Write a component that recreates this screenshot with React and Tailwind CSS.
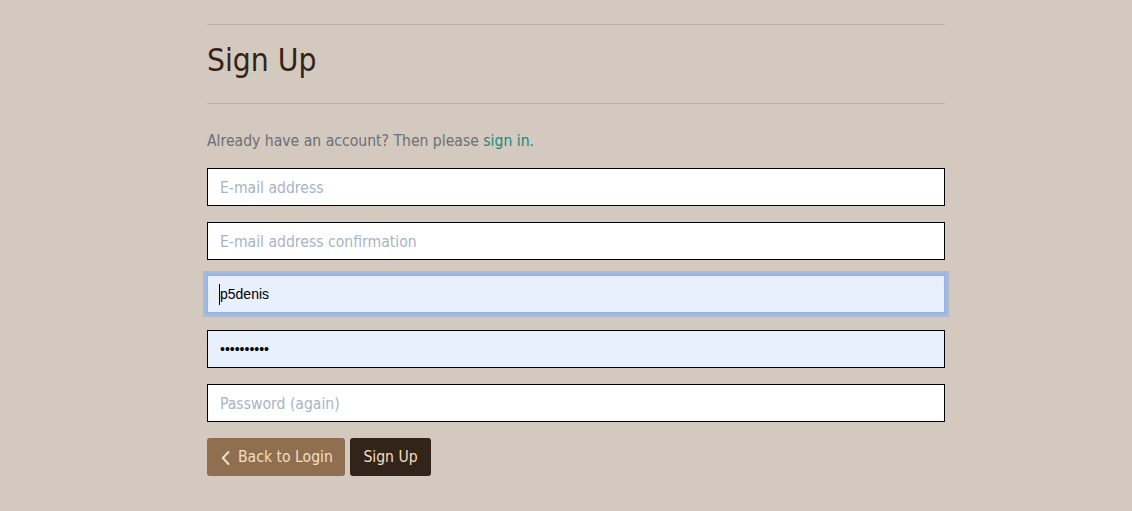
const font = { fontFamily: '"DejaVu Sans Condensed", "DejaVu Sans", sans-serif' };

function Field({ placeholder, value, type = 'text', autofill, focused }) {
    return (
        <div
            className={
                focused
                    ? 'h-[40px] -mx-[1px] -mt-[2px] border-2 border-[#93b4ee] shadow-[0_0_0_3px_#acb9d4] bg-[#e8f0fe] flex items-center px-[12px]'
                    : `h-[38px] border border-black flex items-center px-[12px] ${autofill ? 'bg-[#e8f0fe]' : 'bg-white'}`
            }
        >
            {value ? (
                <span
                    className={`translate-y-[1px] text-[14px] text-black ${focused ? 'border-l border-black -ml-px' : ''}`}
                    style={{ fontFamily: '"Liberation Sans", Arial, sans-serif' }}
                >
                    {type === 'password' ? '••••••••••' : value}
                </span>
            ) : (
                <span className="translate-y-[2px] text-[15.6px] text-[#a9b3c1]">{placeholder}</span>
            )}
        </div>
    );
}

export default function App() {
    return (
        <div className="min-h-[511px] bg-[#d3c9bf] pt-[24px]" style={font}>
            <div className="w-[738px] ml-[207px]">
                <div className="border-t border-[#b9b0a6]" />
                <h1 className="text-[31.5px] leading-none text-[#33241a] pt-[20px] pb-[26px]">Sign Up</h1>
                <div className="border-t border-[#b9b0a6]" />
                <p className="text-[15.6px] text-[#6b6f76] mt-[26px] mb-[16px] leading-[22px]">
                    Already have an account? Then please <span className="text-[#178b7c]">sign in</span>.
                </p>
                <div className="flex flex-col gap-[16px]">
                    <Field placeholder="E-mail address" />
                    <Field placeholder="E-mail address confirmation" />
                    <Field value="p5denis" focused />
                    <Field value="password12" type="password" autofill />
                    <Field placeholder="Password (again)" />
                </div>
                <div className="flex gap-[5px] mt-[16px]">
                    <button className="h-[38px] w-[138px] rounded-[3px] bg-[#8f6f50] text-[#f2dfc4] text-[15.6px] flex items-center pl-[14px] pt-[3px] gap-[8px]">
                        <svg width="9" height="16" viewBox="0 0 9 16" fill="none" stroke="currentColor" strokeWidth="2" strokeLinecap="round" strokeLinejoin="round">
                            <path d="M7.5 2 L1.8 8 L7.5 14" />
                        </svg>
                        Back to Login
                    </button>
                    <button className="h-[38px] w-[81px] rounded-[3px] bg-[#33241a] text-[#f2dfc4] text-[15.6px] pt-[3px]">
                        Sign Up
                    </button>
                </div>
            </div>
        </div>
    );
}
